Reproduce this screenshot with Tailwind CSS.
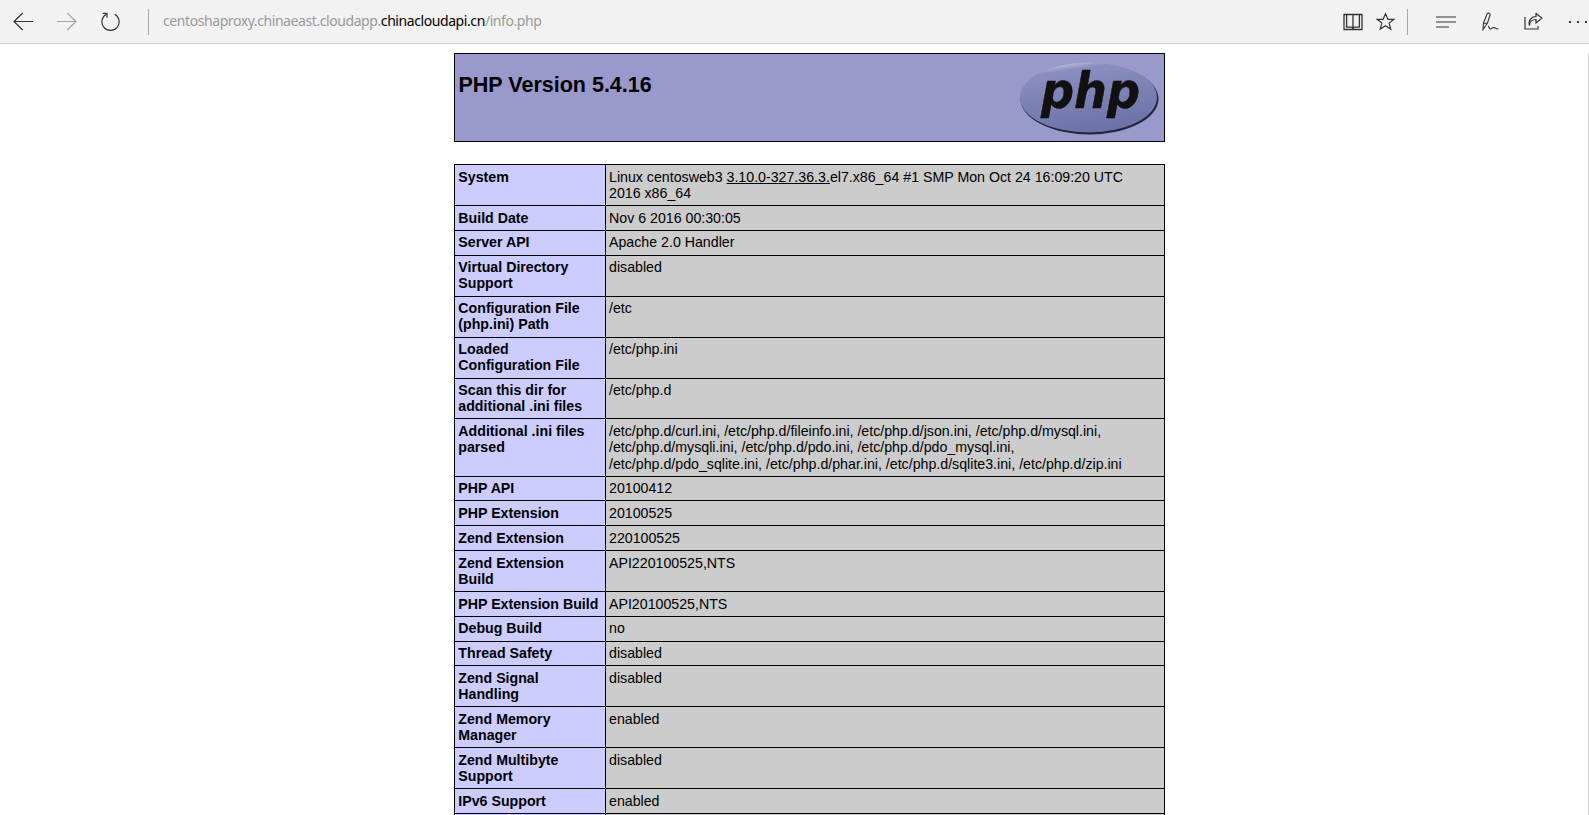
<!DOCTYPE html>
<html lang="en">
<head>
  <meta charset="UTF-8">
  <title>phpinfo()</title>
  <script src="https://cdn.jsdelivr.net/npm/@tailwindcss/browser@4"></script>
</head>
<body class="bg-white text-black h-[815px] overflow-hidden font-['Liberation_Sans',Arial,sans-serif]">
  <!-- browser toolbar -->
  <div class="h-[44px] bg-[#f2f2f2] border-b border-[#cfcfcf] flex items-center">
    <svg class="ml-[13px] w-[20px] h-[19px]" viewBox="0 0 20 19" fill="none" stroke="#333" stroke-width="1.2"><path d="M1 9.500h19M9.700 1L1 9.500 9.700 18"/></svg>
    <svg class="ml-[24px] w-[20px] h-[19px]" viewBox="0 0 20 19" fill="none" stroke="#a6a6a6" stroke-width="1.2"><path d="M0 9.500h19M10.300 1L19 9.500 10.300 18"/></svg>
    <svg class="ml-[24px] -mt-[2px] w-[19px] h-[20px]" viewBox="0 0 19 20" fill="none" stroke="#333" stroke-width="1.2"><path d="M5.200 3.300A8.600 8.600 0 1 0 13.800 3.300"/><path d="M1.800 2.400h4.200v4.400"/></svg>
    <div class="ml-[28px] w-px h-[26px] bg-[#a8a8a8]"></div>
    <div class="ml-[14px] -mt-[2px] text-[14px] text-[#9a9a9a] font-['Noto_Sans',sans-serif] tracking-[-0.42px]">centoshaproxy.chinaeast.cloudapp.<span class="text-black">chinacloudapi.cn</span>/info.php</div>
    <div class="flex-1"></div>
    <svg class="w-[20px] h-[18px]" viewBox="0 0 20 18" fill="none" stroke="#333" stroke-width="1.3"><path d="M1 1.500h18v15H1zM3.600 1.500v12.600h4.600c1 0 1.800.6 1.800 2.400 0-1.800.8-2.400 1.800-2.400h4.600V1.500M10 1.500v15"/></svg>
    <svg class="ml-[13px] w-[19px] h-[19px]" viewBox="0 0 20 19" fill="none" stroke="#333" stroke-width="1.2"><path d="M10 1.200l2.500 6h6.300l-5 4 1.800 6.300L10 13.900l-5.600 3.600 1.800-6.300-5-4h6.300z"/></svg>
    <div class="ml-[12px] w-px h-[26px] bg-[#a8a8a8]"></div>
    <svg class="ml-[28px] w-[20px] h-[12px]" viewBox="0 0 20 12" fill="none" stroke="#333" stroke-width="1.1"><path d="M0 1h20M0 6h20M0 11h13"/></svg>
    <svg class="ml-[26px] w-[17px] h-[19px]" viewBox="0 0 17 19" fill="none" stroke="#333" stroke-width="1.1"><path d="M1 17.500L1.500 11 5 2c.8-1.700 3.700-.7 3 1.200L5.500 11zM1.500 11l4 .4M6 14c1 0 .8 3 2.500 3s1.700-2 3.200-1.500 2 1.500 4.800 1.500"/></svg>
    <svg class="ml-[25px] w-[19px] h-[17px]" viewBox="0 0 19 17" fill="none" stroke="#333" stroke-width="1.2"><path d="M1 4v12h13v-3M5.500 12.500c0-4 3-6 6.500-6V10l6-5-6-4.500V3.500C7 3.500 4 8 5.500 12.500z"/></svg>
    <div class="ml-[26px] mr-[2px] w-[18px] flex justify-between">
      <div class="w-[2px] h-[2px] bg-[#333]"></div>
      <div class="w-[2px] h-[2px] bg-[#333]"></div>
      <div class="w-[2px] h-[2px] bg-[#333]"></div>
    </div>
  </div>

  <div class="h-[771px] border-r border-[#d4d4d4]">
    <div class="w-[711px] ml-[454px] text-[14.2px] leading-[16.2px]">
      <!-- version header -->
      <div class="mt-[9px] h-[89px] border border-black bg-[#9999cc] flex justify-between pl-[3.500px] pr-[4px] pt-[5px]">
        <h1 class="text-[21.5px] leading-[53px] font-bold">PHP Version 5.4.16</h1>
        <svg class="w-[141px] h-[78px] -mt-[1px]" viewBox="0 0 141 78">
          <defs>
            <linearGradient id="oval" x1="0.2" y1="0" x2="0.5" y2="1">
              <stop offset="0" stop-color="#d5d7ea"/>
              <stop offset="0.14" stop-color="#8a8ebf"/>
              <stop offset="1" stop-color="#6c71a9"/>
            </linearGradient>
          </defs>
          <ellipse cx="70.500" cy="41" rx="69" ry="35.500" fill="#23233a"/>
          <ellipse cx="69.500" cy="39.500" rx="68.500" ry="35" fill="url(#oval)"/>
          <text x="71.500" y="50" text-anchor="middle" font-family="DejaVu Sans" font-weight="700" font-style="italic" font-size="50" fill="#111" stroke="#111" stroke-width="0.5" textLength="99" lengthAdjust="spacingAndGlyphs">php</text>
        </svg>
      </div>

      <table class="mt-[22px] w-full border-collapse table-fixed">
        <colgroup><col class="w-[151px]"><col></colgroup>
        <tbody class="[&_td]:border [&_td]:border-black [&_td]:align-top [&_td]:pt-[3.700px] [&_td]:pb-[3.900px] [&_td:first-child]:pl-[3.300px] [&_td:first-child]:pr-[4px] [&_td:last-child]:pl-[3px] [&_td:last-child]:pr-[4px] [&_td:first-child]:bg-[#ccccff] [&_td:first-child]:font-bold [&_td:last-child]:bg-[#cccccc]">
          <tr><td>System</td><td>Linux centosweb3 <span class="underline">3.10.0-327.36.3.</span>el7.x86_64 #1 SMP Mon Oct 24 16:09:20 UTC<br>2016 x86_64</td></tr>
          <tr><td>Build Date</td><td>Nov 6 2016 00:30:05</td></tr>
          <tr><td>Server API</td><td>Apache 2.0 Handler</td></tr>
          <tr><td>Virtual Directory Support</td><td>disabled</td></tr>
          <tr><td>Configuration File (php.ini) Path</td><td>/etc</td></tr>
          <tr><td>Loaded Configuration File</td><td>/etc/php.ini</td></tr>
          <tr><td>Scan this dir for additional .ini files</td><td>/etc/php.d</td></tr>
          <tr><td>Additional .ini files parsed</td><td>/etc/php.d/curl.ini, /etc/php.d/fileinfo.ini, /etc/php.d/json.ini, /etc/php.d/mysql.ini, /etc/php.d/mysqli.ini, /etc/php.d/pdo.ini, /etc/php.d/pdo_mysql.ini, /etc/php.d/pdo_sqlite.ini, /etc/php.d/phar.ini, /etc/php.d/sqlite3.ini, /etc/php.d/zip.ini</td></tr>
          <tr><td>PHP API</td><td>20100412</td></tr>
          <tr><td>PHP Extension</td><td>20100525</td></tr>
          <tr><td>Zend Extension</td><td>220100525</td></tr>
          <tr><td>Zend Extension Build</td><td>API220100525,NTS</td></tr>
          <tr><td>PHP Extension Build</td><td>API20100525,NTS</td></tr>
          <tr><td>Debug Build</td><td>no</td></tr>
          <tr><td>Thread Safety</td><td>disabled</td></tr>
          <tr><td>Zend Signal Handling</td><td>disabled</td></tr>
          <tr><td>Zend Memory Manager</td><td>enabled</td></tr>
          <tr><td>Zend Multibyte Support</td><td>disabled</td></tr>
          <tr><td>IPv6 Support</td><td>enabled</td></tr>
          <tr><td>DTrace Support</td><td>disabled</td></tr>
        </tbody>
      </table>
    </div>
  </div>
</body>
</html>
